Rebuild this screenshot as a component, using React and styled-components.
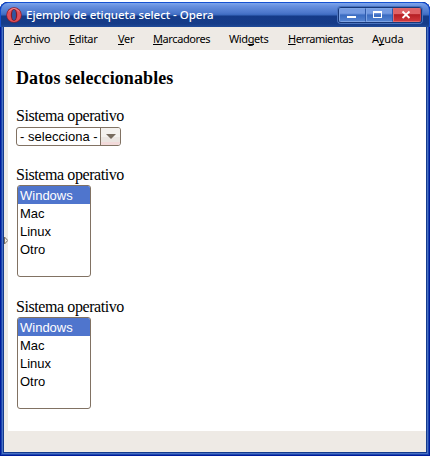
import React from "react";
import styled, { createGlobalStyle } from "styled-components";

const GlobalStyle = createGlobalStyle`
  * { box-sizing: border-box; }
  body { margin: 0; background: #fff; overflow: hidden; }
`;

const Window = styled.div`
  width: 430px;
  height: 454px;
  margin-top: 2px;
  display: flex;
  flex-direction: column;
  border-radius: 8px 8px 0 0;
  overflow: hidden;
  padding: 0 4px 4px;
  background: #153c8e;
  box-shadow: inset 0 0 0 1px #001c9c, inset 0 0 0 2px #1c46ae, inset 0 0 0 3px #4a70c4;
`;

const TitleBar = styled.header`
  flex: none;
  height: 25px;
  margin: 0 -4px;
  padding: 0 7px 0 6px;
  display: flex;
  align-items: flex-start;
  border-radius: 8px 8px 0 0;
  border: 1px solid #1652d2;
  border-bottom: 0;
  background: linear-gradient(#7fa6ea 0, #6890df 3px, #4a76ca 10px, #3968bd 12px, #153b88 13px, #163c89 21px, #24509f 25px);
`;

const Logo = styled.svg`
  flex: none;
  width: 16px;
  height: 16px;
  margin-top: 4px;
  margin-left: -1px;
`;

const Title = styled.h1`
  margin: 0 0 0 4px;
  flex: 1;
  white-space: nowrap;
  font: 500 11.5px/23px "Noto Sans", sans-serif;
  letter-spacing: -0.03px;
  color: #fff;
`;

const Controls = styled.div`
  display: flex;
  margin-top: 4px;
  width: 84px;
  height: 16px;
  border: 1px solid #163779;
  border-radius: 3px;
  box-shadow: 0 0 0 1px #4a73be;
  overflow: hidden;
`;

const ControlButton = styled.button`
  flex: 1;
  padding: 0;
  display: flex;
  border: 1px solid ${(p) => (p.$close ? "#df686b" : "#7da3e4")};
  border-right-color: ${(p) => (p.$close ? "#c74246" : "#305aaa")};
  background: ${(p) =>
    p.$close
      ? "linear-gradient(#df6266 0 45%, #b51e23 46%, #cf363b)"
      : "linear-gradient(#759be2 0 35%, #4c79cb 46%, #396abf 48%, #5382d1)"};
`;

const MenuBar = styled.nav`
  flex: none;
  height: 23px;
  padding-left: 10px;
  display: grid;
  grid-template-columns: 55px 49px 35px 76px 59px 84px 1fr;
  background: #eeeae5;
  font: 11px/24px "Noto Sans", sans-serif;
  color: #000;
`;

const MenuItem = styled.span`
  white-space: nowrap;
  letter-spacing: ${(p) => p.$track}px;
  u { text-underline-offset: 1px; text-decoration-thickness: 1px; text-decoration-skip-ink: none; }
`;

const Body = styled.div`
  flex: 1;
  display: flex;
  background: #eeeae5;
`;

const PanelToggle = styled.div`
  width: 4px;
  display: flex;
  align-items: flex-start;
  svg { flex: none; margin-top: 186px; overflow: visible; }
`;

const Page = styled.main`
  flex: 1;
  padding: 18px 8px 0;
  background: #fff;
  color: #000;
`;

const Heading = styled.h2`
  margin: 0 0 18px;
  font: bold 18px/21px "Liberation Serif", serif;
  letter-spacing: 0.1px;
`;

const Label = styled.label`
  display: block;
  height: ${(p) => p.$height || 20}px;
  font: 16px/18px "Liberation Serif", serif;
  letter-spacing: -0.42px;
`;

const Dropdown = styled.div`
  width: 105px;
  height: 19px;
  margin-bottom: 20px;
  display: flex;
  border: 1px solid #817263;
  border-radius: 3px;
  overflow: hidden;
  font: 13px/18px "Liberation Sans", sans-serif;
`;

const DropdownValue = styled.span`
  width: 84px;
  padding-left: 3px;
  white-space: nowrap;
  letter-spacing: 0.03px;
  border-right: 1px solid #817263;
`;

const DropdownArrow = styled.span`
  flex: 1;
  display: flex;
  align-items: center;
  justify-content: center;
  background: linear-gradient(#f4f1ee 0 50%, #ebe5e1 51% 82%, #f2dada 83%);
`;

const ListBox = styled.div`
  width: 74px;
  height: 92px;
  margin: 0 0 21px 1px;
  border: 1px solid #817263;
  border-radius: 3px;
  overflow: hidden;
`;

const Option = styled.div`
  height: 18px;
  padding-left: 2px;
  font: 13px/19px "Liberation Sans", sans-serif;
  background: ${(p) => (p.$selected ? "#4f75cd" : "transparent")};
  color: ${(p) => (p.$selected ? "#fff" : "#000")};
`;

const StatusBar = styled.footer`
  flex: none;
  height: 21px;
  background: #eeeae5;
`;

const systems = ["Windows", "Mac", "Linux", "Otro"];

function SystemList() {
  return (
    <section>
      <Label $height={19}>Sistema operativo</Label>
      <ListBox role="listbox">
        {systems.map((name, i) => (
          <Option key={name} role="option" $selected={i === 0}>{name}</Option>
        ))}
      </ListBox>
    </section>
  );
}

export default function App() {
  return (
    <>
      <GlobalStyle />
      <Window>
        <TitleBar>
          <Logo viewBox="0 0 16 16">
            <ellipse cx="8" cy="8" rx="7.7" ry="7.8" fill="#8f1f2b" />
            <ellipse cx="8" cy="8" rx="7" ry="7.1" fill="#e0505a" />
            <path d="M3 4.5Q5 1.5 8 1.5t5 3" stroke="#f19a9c" fill="none" strokeWidth=".9" />
            <ellipse cx="8" cy="8" rx="3.2" ry="6" fill="#851925" />
            <ellipse cx="8" cy="8" rx="2" ry="5.2" fill="#3156a0" />
          </Logo>
          <Title>Ejemplo de etiqueta select - Opera</Title>
          <Controls>
            <ControlButton aria-label="Minimizar">
              <svg width="24" height="12" viewBox="0 0 24 12"><path d="M7 7h9v2H7z" fill="#fff" /></svg>
            </ControlButton>
            <ControlButton aria-label="Maximizar">
              <svg width="24" height="12" viewBox="0 0 24 12" shapeRendering="crispEdges">
                <path fillRule="evenodd" d="M6 2h9v7H6zM7 4v4h7V4z" fill="#fff" />
              </svg>
            </ControlButton>
            <ControlButton $close aria-label="Cerrar">
              <svg width="26" height="12" viewBox="0 0 26 12"><path d="M8.5 2.5l7 6.5m0-6.5l-7 6.5" stroke="#fff" strokeWidth="1.8" /></svg>
            </ControlButton>
          </Controls>
        </TitleBar>
        <MenuBar>
          <MenuItem $track={-0.35}><u>A</u>rchivo</MenuItem>
          <MenuItem $track={-0.35}><u>E</u>ditar</MenuItem>
          <MenuItem $track={-0.35}><u>V</u>er</MenuItem>
          <MenuItem $track={-0.4}><u>M</u>arcadores</MenuItem>
          <MenuItem $track={-0.4}>Wid<u>g</u>ets</MenuItem>
          <MenuItem $track={-0.5}><u>H</u>erramientas</MenuItem>
          <MenuItem $track={-0.2}>A<u>y</u>uda</MenuItem>
        </MenuBar>
        <Body>
          <PanelToggle>
            <svg width="4" height="9" viewBox="0 0 4 9"><path d="M.5 1v7L3.8 4.5z" fill="#eeeae5" stroke="#776c60" /></svg>
          </PanelToggle>
          <Page>
            <Heading>Datos seleccionables</Heading>
            <Label>Sistema operativo</Label>
            <Dropdown role="combobox">
              <DropdownValue>- selecciona -</DropdownValue>
              <DropdownArrow>
                <svg width="10" height="5" viewBox="0 0 10 5"><path d="M0 0h10L5 5z" fill="#776b5e" /></svg>
              </DropdownArrow>
            </Dropdown>
            <SystemList />
            <SystemList />
          </Page>
        </Body>
        <StatusBar />
      </Window>
    </>
  );
}
